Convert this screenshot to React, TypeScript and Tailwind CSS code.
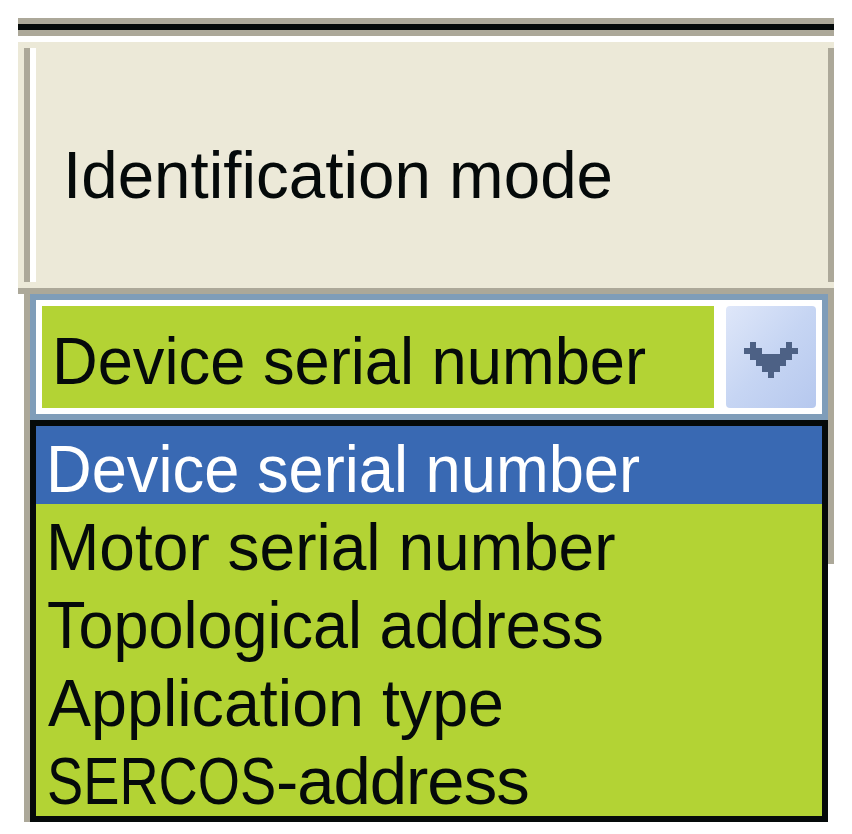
import React from "react";

const Arrow = () => (
  <svg width="54" height="36" viewBox="0 0 9 6" shapeRendering="crispEdges">
    <g fill="#4d6185">
      <rect x="1" y="0" width="1" height="1" />
      <rect x="7" y="0" width="1" height="1" />
      <rect x="0" y="1" width="3" height="1" />
      <rect x="6" y="1" width="3" height="1" />
      <rect x="1" y="2" width="7" height="1" />
      <rect x="2" y="3" width="5" height="1" />
      <rect x="3" y="4" width="3" height="1" />
      <rect x="4" y="5" width="1" height="1" />
    </g>
  </svg>
);

export default function App() {
  return (
    <div className="w-[852px] h-[834px] bg-white pt-[18px] pl-[18px] overflow-hidden font-['Liberation_Sans',Arial,sans-serif] text-[#050a0a]">
      <div className="w-[816px] flex flex-col">
        <div className="h-[6px] bg-[#aca899]" />
        <div className="h-[6px] bg-[#050a0a]" />
        <div className="h-[6px] bg-[#aca899]" />
        <div className="h-[6px] bg-white" />
        <div className="bg-[#ece9d8] pt-[6px] pb-[6px] pl-[6px]">
          <div className="flex h-[234px]">
            <div className="w-[6px] bg-[#aca899]" />
            <div className="w-[6px] bg-white" />
            <div className="flex-1 pl-[27px] pt-[88px] text-[67px] leading-[78px] whitespace-nowrap">
              <span className="block origin-left scale-x-[0.978]">Identification mode</span>
            </div>
            <div className="w-[6px] bg-[#aca899]" />
          </div>
        </div>
        <div className="h-[6px] bg-[#aca899]" />
        <div className="flex">
          <div className="w-[6px] bg-white" />
          <div className="w-[6px] h-[528px] bg-[#aca899]" />
          <div className="w-[798px] flex flex-col">
            <div className="border-[6px] border-[#7f9db9] bg-white p-[6px] flex gap-[12px]">
              <div className="flex-1 h-[102px] bg-[#b3d334] pl-[10px] pt-[8px] text-[67px] leading-[94px] whitespace-nowrap">
                <span className="block origin-left scale-x-[0.944]">Device serial number</span>
              </div>
              <div className="w-[90px] h-[102px] rounded-[4px] bg-linear-to-br from-[#dfe7f9] via-[#c6d5f3] to-[#b6c8ee] flex justify-center items-center pt-[6px]">
                <Arrow />
              </div>
            </div>
            <div className="border-[6px] border-[#050a0a] bg-[#b3d334] flex flex-col text-[67px] leading-[70px] whitespace-nowrap">
              <div className="h-[78px] pt-[8px] pl-[10px] bg-[#3969b3] text-white">
                <span className="block origin-left scale-x-[0.944]">Device serial number</span>
              </div>
              <div className="h-[78px] pt-[8px] pl-[10px]">
                <span className="block origin-left scale-x-[0.956]">Motor serial number</span>
              </div>
              <div className="h-[78px] pt-[8px] pl-[11px]">
                <span className="block origin-left scale-x-[0.94]">Topological address</span>
              </div>
              <div className="h-[78px] pt-[8px] pl-[12px]">
                <span className="block origin-left scale-x-[0.964]">Application type</span>
              </div>
              <div className="h-[78px] pt-[8px] pl-[11px]">
                <span className="block">
                  <span className="inline-block origin-left scale-x-[0.81] -mr-[54px]">SERCOS</span>
                  <span className="tracking-[-1px]">-address</span>
                </span>
              </div>
            </div>
          </div>
          <div className="w-[6px] h-[270px] bg-[#aca899]" />
        </div>
      </div>
    </div>
  );
}
